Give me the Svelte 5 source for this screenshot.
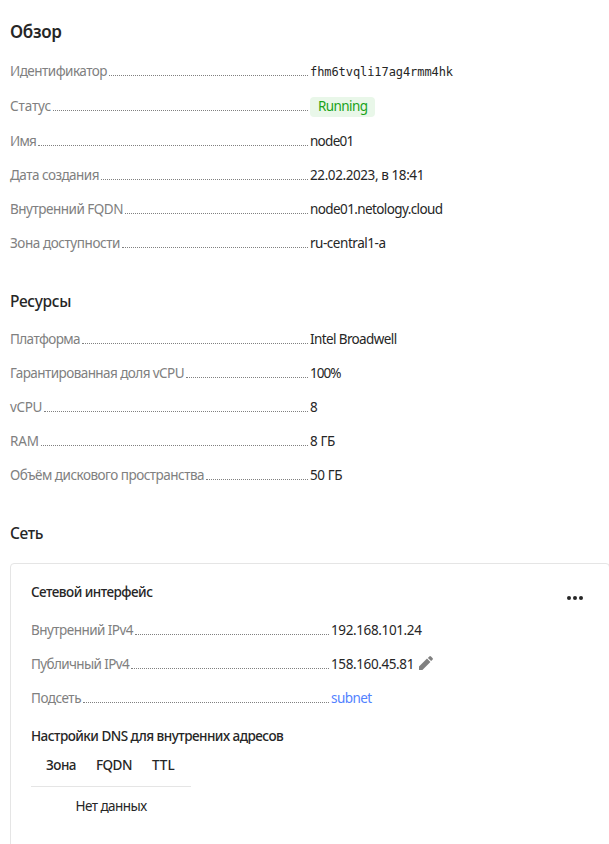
<script>
  const overview = [
    { label: 'Идентификатор', w: 97, value: 'fhm6tvqli17ag4rmm4hk', vw: 143, kind: 'mono' },
    { label: 'Статус', w: 41, value: 'Running', vw: 49.5, kind: 'badge' },
    { label: 'Имя', w: 26, value: 'node01', vw: 43.5 },
    { label: 'Дата создания', w: 89, value: '22.02.2023, в 18:41', vw: 114 },
    { label: 'Внутренний FQDN', w: 113, value: 'node01.netology.cloud', vw: 132.5 },
    { label: 'Зона доступности', w: 110, value: 'ru-central1-a', vw: 75.5 }
  ];
  const resources = [
    { label: 'Платформа', w: 70, value: 'Intel Broadwell', vw: 86.5 },
    { label: 'Гарантированная доля vCPU', w: 174, value: '100%', vw: 30.5 },
    { label: 'vCPU', w: 32, value: '8', vw: 7 },
    { label: 'RAM', w: 29, value: '8 ГБ', vw: 25 },
    { label: 'Объём дискового пространства', w: 194, value: '50 ГБ', vw: 32 }
  ];
  const network = [
    { label: 'Внутренний IPv4', w: 102, value: '192.168.101.24', vw: 90.5 },
    { label: 'Публичный IPv4', w: 98, value: '158.160.45.81', vw: 83, kind: 'edit' },
    { label: 'Подсеть', w: 50, value: 'subnet', vw: 40.5, kind: 'link' }
  ];

  const ctx = document.createElement('canvas').getContext('2d');

  // Letter spacing that gives a string the requested advance width.
  function tracking(text, width, mono = false) {
    ctx.font = mono ? '12px "DejaVu Sans Mono"' : '13.5px "Noto Sans"';
    return ((width - ctx.measureText(text).width) / text.length).toFixed(3);
  }
</script>

{#snippet rows(items)}
  <dl>
    {#each items as item}
      <div class="row" class:tall={item.kind === 'badge'}>
        <dt><span class="label" style="width: {item.w}px; letter-spacing: {tracking(item.label, item.w)}px">{item.label}</span><span class="dots"></span></dt>
        <dd class={item.kind ?? 'plain'} style="letter-spacing: {tracking(item.value, item.vw, item.kind === 'mono')}px">
          {#if item.kind === 'link'}
            <a href="#subnet">{item.value}</a>
          {:else}
            <span>{item.value}</span>
          {/if}
          {#if item.kind === 'edit'}
            <svg width="14" height="14" viewBox="0 0 14 14" fill="#808080">
              <path d="M0 14v-3.4L8 2.6l3.4 3.4L3.4 14zM8.9 1.9 10.3.5a1.2 1.2 0 0 1 1.7 0l1.5 1.5a1.2 1.2 0 0 1 0 1.7l-1.4 1.4z" />
            </svg>
          {/if}
        </dd>
      </div>
    {/each}
  </dl>
{/snippet}

<main>
  <h1>Обзор</h1>
  {@render rows(overview)}
  <h2>Ресурсы</h2>
  {@render rows(resources)}
  <h2>Сеть</h2>
  <section class="card">
    <header>
      <h3>Сетевой интерфейс</h3>
      <svg width="16" height="4" viewBox="0 0 16 4" fill="#262626">
        <circle cx="2" cy="2" r="2" /><circle cx="8" cy="2" r="2" /><circle cx="14" cy="2" r="2" />
      </svg>
    </header>
    {@render rows(network)}
    <h3 class="dns">Настройки DNS для внутренних адресов</h3>
    <table>
      <thead><tr><th class="zone">Зона</th><th class="fqdn">FQDN</th><th class="ttl">TTL</th></tr></thead>
      <tbody><tr><td colspan="3">Нет данных</td></tr></tbody>
    </table>
  </section>
</main>

<style>
  :global(body) { background: #fff; overflow: hidden; }
  main {
    box-sizing: border-box;
    width: 609px;
    height: 844px;
    overflow: hidden;
    padding: 21px 0 0 10px;
    font: 13.5px/18px "Noto Sans", "Open Sans", sans-serif;
    letter-spacing: -0.55px;
    color: #262626;
  }
  h1, h2, h3, dl, dd { margin: 0; }
  h1 { font-size: 17px; line-height: 22px; font-weight: 600; letter-spacing: -0.3px; margin-bottom: 20px; }
  h2 { font-size: 15.5px; line-height: 20px; font-weight: 500; letter-spacing: -0.35px; margin: 38px 0 20px; }
  h3 { font-size: 13.5px; line-height: 18px; font-weight: 500; letter-spacing: -0.53px; }
  dl { display: flex; flex-direction: column; gap: 16px; }
  .row { display: flex; height: 18px; line-height: 16px; }
  .row.tall { height: 20px; align-items: center; }
  dt { width: 300px; height: 18px; display: flex; align-items: flex-start; color: #808080; }
  .label { flex: none; white-space: nowrap; }
  .dots { flex: 1; height: 12px; margin: 0 2px; border-bottom: 1px dotted #808080; }
  dd { display: flex; align-items: flex-start; white-space: nowrap; }
  .mono { font-family: "DejaVu Sans Mono", monospace; font-size: 12px; line-height: 18px; }
  .badge span { height: 20px; line-height: 18px; width: 49px; padding: 0 8px; border-radius: 4px; background: #e9f7e9; color: #1aa31a; }
  .edit { gap: 5px; }
  a { color: #5282ff; text-decoration: none; }
  .card {
    box-sizing: border-box;
    width: 600px;
    height: 300px;
    padding: 19px 20px 0;
    border: 1px solid #e5e5e5;
    border-radius: 4px;
  }
  header { display: flex; justify-content: space-between; align-items: flex-start; margin-bottom: 21px; }
  header svg { margin: 13px 6px 0 0; }
  .dns { margin: 19px 0 9px; }
  table { width: 160px; table-layout: fixed; border-collapse: collapse; }
  th { font-weight: 500; text-align: left; padding: 2px 0 12px 15px; border-bottom: 1px solid #e5e5e5; }
  .zone { width: 35px; }
  .fqdn { width: 41px; }
  .ttl { letter-spacing: 0; }
  td { text-align: center; padding: 10px 0; }
</style>
